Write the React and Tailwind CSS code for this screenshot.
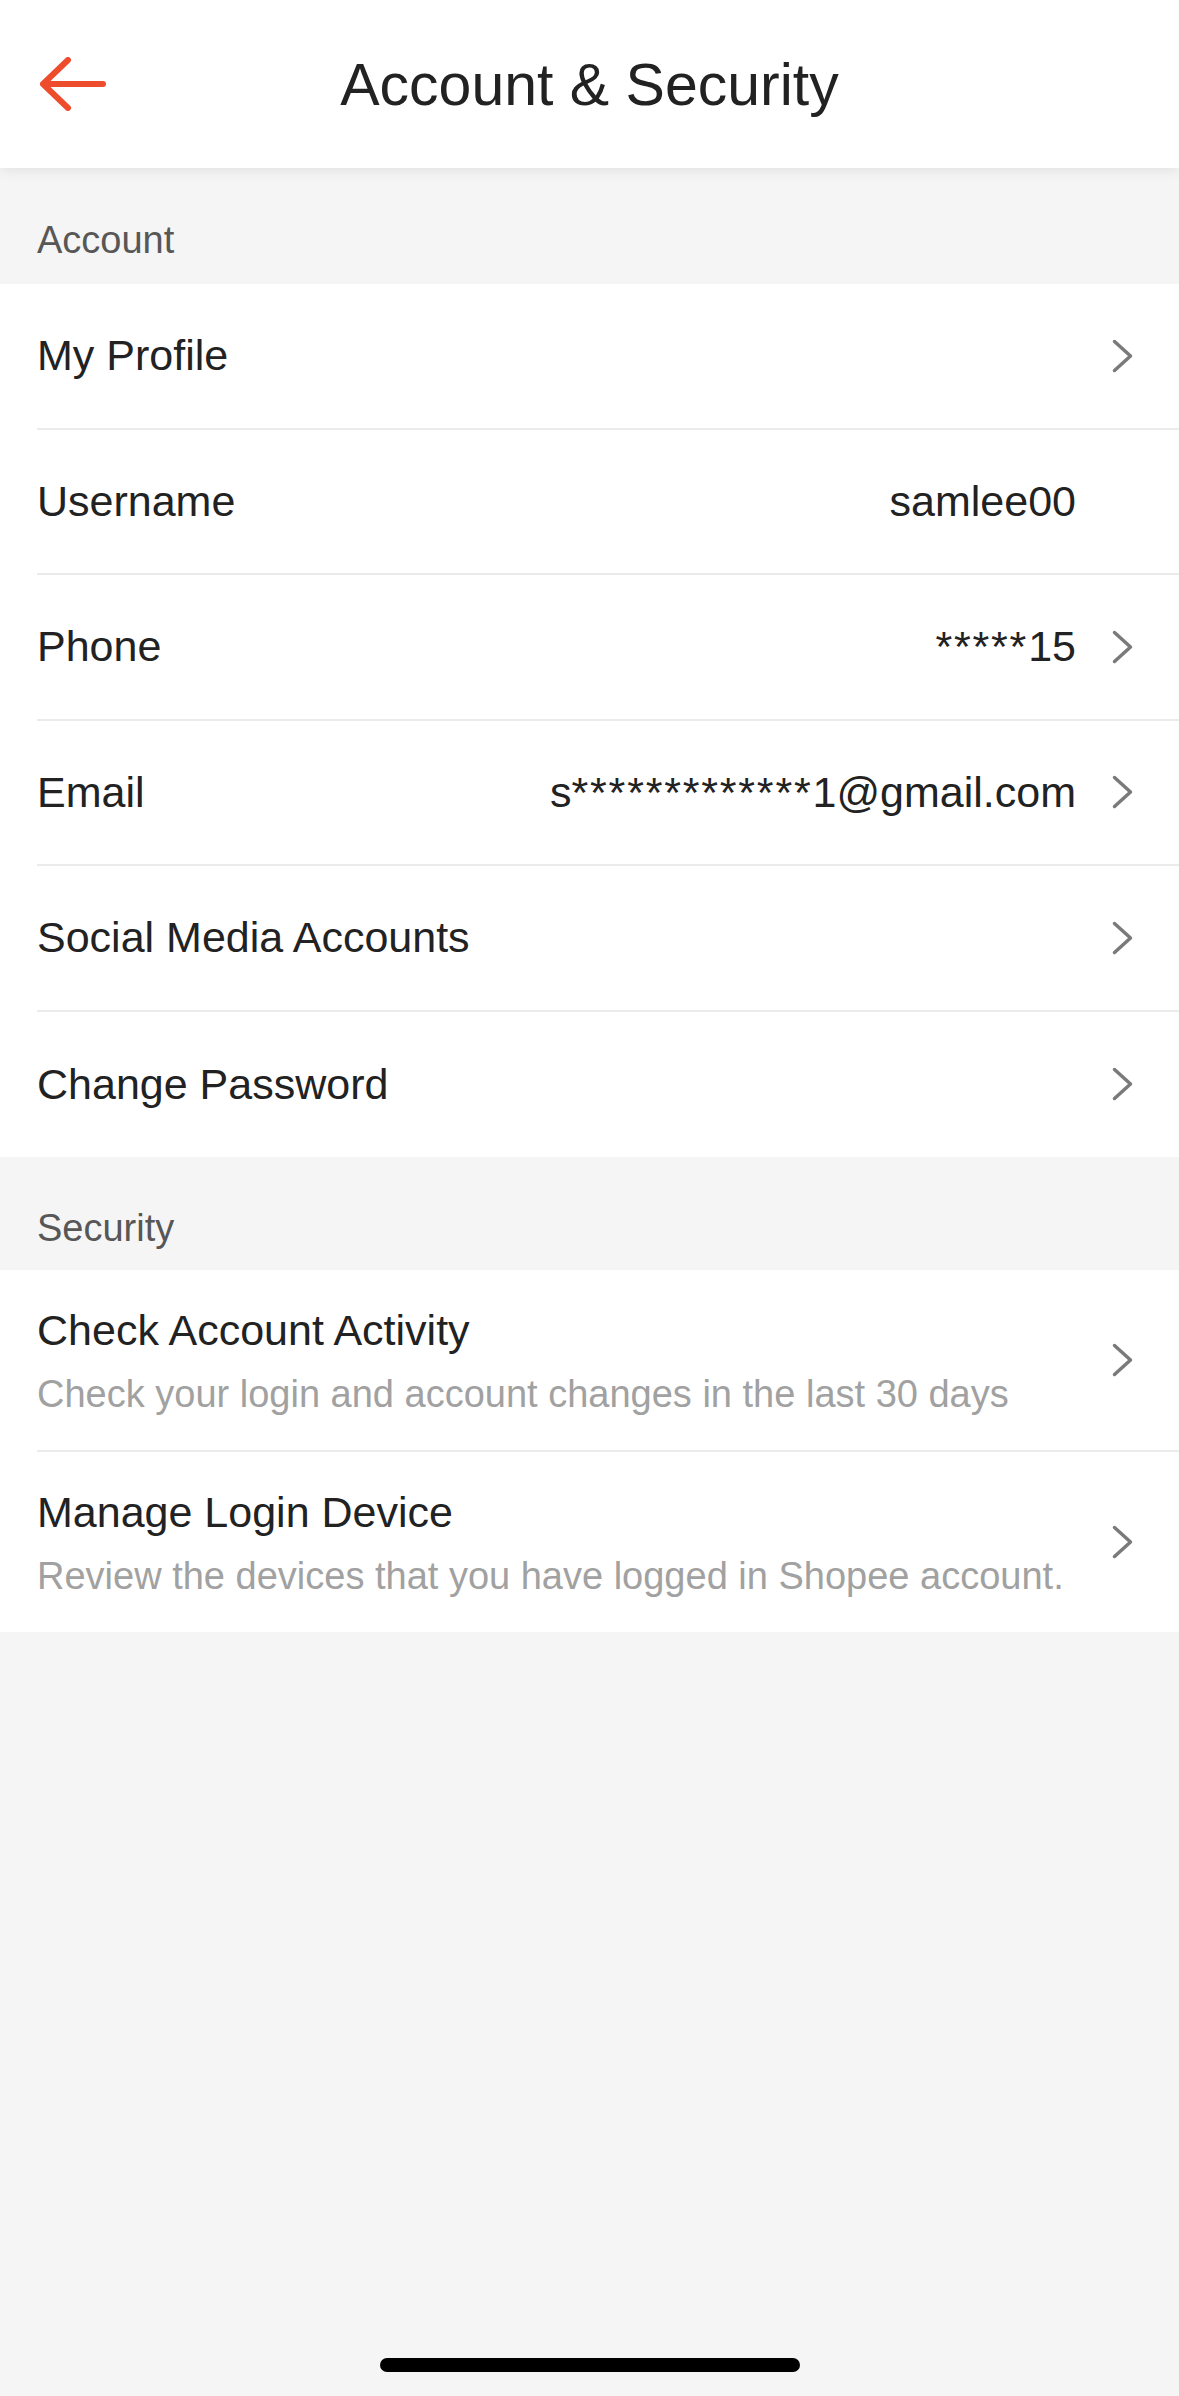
const font = { fontFamily: '"Liberation Sans", Arial, sans-serif' };

const Chevron = ({ hidden }) => (
  <div className="ml-[36px] flex w-[21px] shrink-0 justify-center">
    {!hidden && (
      <svg width="21" height="34" viewBox="0 0 21 34" fill="none">
        <path d="M2.5 2.5 L18.5 17 L2.5 31.5" stroke="#7a7a7a" strokeWidth="3.5" strokeLinecap="round" strokeLinejoin="round" />
      </svg>
    )}
  </div>
);

const SectionHeader = ({ title, className }) => (
  <div className={`flex items-center pl-[37px] pt-[28px] ${className}`}>
    <span className="text-[38px] leading-none text-[#575757]">{title}</span>
  </div>
);

// masked values: asterisks in the reference are a little wider than Arial's
const Masked = ({ head, stars, tail }) => (
  <>
    {head}
    <span className="tracking-[1.8px]">{'*'.repeat(stars)}</span>
    {tail}
  </>
);

const Row = ({ label, value, noArrow, last }) => (
  <div className="bg-white pl-[37px]">
    <div className={`flex h-[145.5px] items-center pr-[46px] ${last ? '' : 'border-b-2 border-[#ebebeb]'}`}>
      <span className="text-[43px] leading-none text-[#222222]">{label}</span>
      <span className="ml-auto text-[43px] leading-none text-[#222222]">{value}</span>
      <Chevron hidden={noArrow} />
    </div>
  </div>
);

const DetailRow = ({ title, desc, last }) => (
  <div className="bg-white pl-[37px]">
    <div className={`flex items-center pr-[46px] ${last ? 'h-[180px]' : 'h-[182px] border-b-2 border-[#ebebeb]'}`}>
      <div className="flex flex-col">
        <span className="text-[43px] leading-[52px] text-[#222222]">{title}</span>
        <span className="mt-[16px] text-[38px] leading-[44px] text-[#a1a1a1]">{desc}</span>
      </div>
      <span className="ml-auto" />
      <Chevron />
    </div>
  </div>
);

export default function App() {
  return (
    <div className="flex min-h-screen flex-col bg-[#f5f5f5]" style={font}>
      {/* top bar */}
      <div className="relative z-10 grid h-[168px] grid-cols-[1fr_auto_1fr] items-center bg-white shadow-[0_3px_12px_rgba(0,0,0,0.08)]">
        <div className="pl-[40px]">
          <svg width="66" height="54" viewBox="0 0 66 54" fill="none">
            <path d="M3 27 H63 M28 3 L3 27 L28 51" stroke="#ee4d2d" strokeWidth="6" strokeLinecap="round" strokeLinejoin="round" />
          </svg>
        </div>
        <h1 className="pt-[2px] text-[59px] leading-none text-[#222222]">Account &amp; Security</h1>
        <div />
      </div>

      <SectionHeader title="Account" className="h-[116px]" />
      <Row label="My Profile" />
      <Row label="Username" value="samlee00" noArrow />
      <Row label="Phone" value={<Masked stars={5} tail="15" />} />
      <Row label="Email" value={<Masked head="s" stars={13} tail="1@gmail.com" />} />
      <Row label="Social Media Accounts" />
      <Row label="Change Password" last />

      <SectionHeader title="Security" className="h-[113px]" />
      <DetailRow title="Check Account Activity" desc="Check your login and account changes in the last 30 days" />
      <DetailRow title="Manage Login Device" desc="Review the devices that you have logged in Shopee account." last />

      <div className="flex-1" />
      <div className="flex justify-center pb-[24px]">
        <div className="h-[14px] w-[420px] rounded-full bg-black" />
      </div>
    </div>
  );
}
